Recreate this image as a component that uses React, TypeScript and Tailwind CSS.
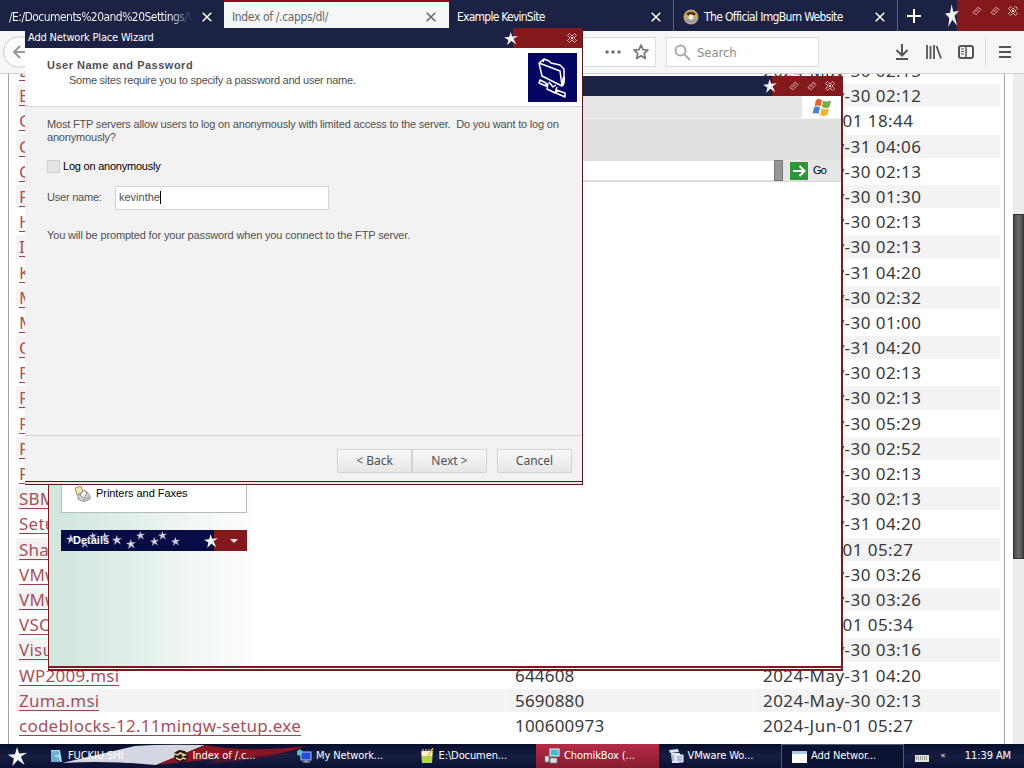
import React from 'react';
import { clsx } from 'clsx';

interface FileRow {
  name: string;
  size?: string;
  date: string;
}

const files: FileRow[] = [
  { name: 'D', date: '2024-May-30 02:13' },
  { name: 'E', date: '2024-May-30 02:12' },
  { name: 'G', date: '2024-Jun-01 18:44' },
  { name: 'G', date: '2024-May-31 04:06' },
  { name: 'G', date: '2024-May-30 02:13' },
  { name: 'F', date: '2024-May-30 01:30' },
  { name: 'H', date: '2024-May-30 02:13' },
  { name: 'I', date: '2024-May-30 02:13' },
  { name: 'K', date: '2024-May-31 04:20' },
  { name: 'M', date: '2024-May-30 02:32' },
  { name: 'M', date: '2024-May-30 01:00' },
  { name: 'O', date: '2024-May-31 04:20' },
  { name: 'P', date: '2024-May-30 02:13' },
  { name: 'P', date: '2024-May-30 02:13' },
  { name: 'P', date: '2024-May-30 05:29' },
  { name: 'P', date: '2024-May-30 02:52' },
  { name: 'P', date: '2024-May-30 02:13' },
  { name: 'SBM', date: '2024-May-30 02:13' },
  { name: 'Setu', date: '2024-May-31 04:20' },
  { name: 'Sha', date: '2024-Jun-01 05:27' },
  { name: 'VMw', date: '2024-May-30 03:26' },
  { name: 'VMw', date: '2024-May-30 03:26' },
  { name: 'VSC', date: '2024-Jun-01 05:34' },
  { name: 'Visu', date: '2024-May-30 03:16' },
  { name: 'WP2009.msi', size: '644608', date: '2024-May-31 04:20' },
  { name: 'Zuma.msi', size: '5690880', date: '2024-May-30 02:13' },
  { name: 'codeblocks-12.11mingw-setup.exe', size: '100600973', date: '2024-Jun-01 05:27' },
];

const Star = ({ className }: { className?: string }) => (
  <svg viewBox="0 0 20 20" preserveAspectRatio="none" className={className} fill="#f4f4fa">
    <path d="M9.500 0l2.200 6.800L20 6l-6.400 4.300L17.500 19l-7.100-5.200L4.500 20l1.700-7.800L0 8.200l7.300-.7z" />
  </svg>
);

const CloseX = ({ className }: { className?: string }) => (
  <svg viewBox="0 0 10 10" className={clsx('h-[10px] w-[10px] shrink-0', className)} fill="none" stroke="currentColor" strokeWidth="1.5">
    <path d="M.7.7l8.6 8.6M9.3.7L.7 9.3" />
  </svg>
);

// Themed caption buttons: dotted diamonds and a checkered cross
const CaptionDiamond = () => (
  <svg viewBox="0 0 10 10" className="h-[10px] w-[10px]" fill="none" stroke="#f3d5cf" strokeWidth="1" strokeDasharray="1.6 .5">
    <path d="M1 6.500L6 1.200l3 2.300L4 8.800zM3.500 6l3-2.700" />
  </svg>
);

const CaptionClose = () => (
  <svg viewBox="0 0 10 10" className="h-[10px] w-[10px]" fill="none" stroke="#f6e2de" strokeWidth="1">
    <path d="M.5 2.500l2-2L5 3 7.500.5l2 2L7 5l2.500 2.500-2 2L5 7 2.500 9.500l-2-2L3 5z" strokeDasharray="1.6 .5" />
    <path d="M3.500 3.500l3 3M6.500 3.500l-3 3" />
  </svg>
);

const Tabs = () => (
  <div className="flex h-[31px] bg-[#1b2243] text-[12px] text-white">
    <div className="flex w-[224px] items-center pl-[9px] pr-[12px] pt-[2px]">
      <span className="w-[184px] overflow-hidden whitespace-nowrap bg-gradient-to-r from-white from-88% to-[#1b2243] bg-clip-text tracking-[-0.550px] text-transparent">/E:/Documents%20and%20Settings/V</span>
      <CloseX className="ml-auto" />
    </div>
    <div className="flex h-[28px] w-[225px] items-center border-t-2 border-[#8c0b1c] bg-[#f5f6f6] pl-[8px] pr-[13px] pt-[3px] text-[#666]">
      <span className="tracking-[-0.350px]">Index of /.capps/dl/</span>
      <CloseX className="ml-auto" />
    </div>
    <div className="flex w-[224px] items-center pl-[8px] pr-[12px] pt-[2px]">
      <span className="tracking-[-0.750px]">Example KevinSite</span>
      <CloseX className="ml-auto" />
    </div>
    <div className="flex w-[225px] items-center border-x border-[#596080] pl-[9px] pr-[12px] pt-[2px]">
      <svg viewBox="0 0 16 16" className="mr-[5px] h-4 w-4">
        <circle cx="8" cy="8" r="7.500" fill="#b9a58c" />
        <path d="M2 8a6 6 0 0 1 12 0z" fill="#e8a61e" />
        <path d="M3 5a6 5 0 0 1 10 0l-5 3z" fill="#4c3a2a" />
        <path d="M2 9c3 4 9 4 12 0a6.400 6.400 0 0 1-12 0z" fill="#7f93bd" />
        <circle cx="8" cy="8" r="2.400" fill="#fff" />
      </svg>
      <span className="tracking-[-0.650px]">The Official ImgBurn Website</span>
      <CloseX className="ml-auto" />
    </div>
    <div className="flex w-[47px] items-center pl-[9px]">
      <svg viewBox="0 0 14 14" className="h-[14px] w-[14px]" stroke="#fff" strokeWidth="2">
        <path d="M7 0v14M0 7h14" />
      </svg>
    </div>
    <div className="flex flex-1 bg-gradient-to-r from-[#1b2243] from-15% to-[#84191d] to-15%">
      <Star className="mt-[4px] h-[23px] w-[14px]" />
      <div className="ml-auto flex gap-[8px] pr-[6px] pt-[6px]">
        <CaptionDiamond />
        <CaptionDiamond />
        <CaptionClose />
      </div>
    </div>
  </div>
);

const Toolbar = () => (
  <div className="flex h-[43px] items-center border-b border-[#d2d2d2] bg-[#f5f6f7]">
    <div className="ml-[3px] flex h-[32px] w-[32px] items-center rounded-full border border-[#ccc] bg-[#fbfbfb] pl-[8px]">
      <svg viewBox="0 0 16 14" className="h-[14px] w-4" fill="none" stroke="#999" strokeWidth="2">
        <path d="M16 7H2M8 1L2 7l6 6" />
      </svg>
    </div>
    <div className="ml-[20px] flex h-[30px] w-[601px] items-center justify-end gap-[12px] border border-[#ddd] bg-white pr-[6px]">
      <svg viewBox="0 0 16 4" className="h-1 w-4" fill="#777">
        <circle cx="2" cy="2" r="1.800" />
        <circle cx="8" cy="2" r="1.800" />
        <circle cx="14" cy="2" r="1.800" />
      </svg>
      <svg viewBox="0 0 16 16" className="h-4 w-4" fill="none" stroke="#777" strokeWidth="1.700" strokeLinejoin="round">
        <path d="M8 1l2 4.700 5 .4-3.800 3.300 1.200 5.100L8 11.800l-4.400 2.700 1.200-5.100L1 6.100l5-.4z" />
      </svg>
    </div>
    <div className="ml-[10px] flex h-[30px] w-[153px] items-center border border-[#ddd] bg-white pl-[7px]">
      <svg viewBox="0 0 17 17" className="h-[17px] w-[17px]" fill="none" stroke="#aaa" strokeWidth="2">
        <circle cx="6.500" cy="6.500" r="5" />
        <path d="M10 10l6 6" />
      </svg>
      <span className="ml-[6px] pt-[2px] text-[13px] tracking-[-0.100px] text-[#8c8c8c]">Search</span>
    </div>
    <div className="ml-auto flex items-center pr-[13px] text-[#555]">
      <svg viewBox="0 0 14 16" className="h-4 w-[14px]" fill="none" stroke="currentColor" strokeWidth="2">
        <path d="M7 0v11M1.500 6L7 11.500 12.500 6M1 15h12" />
      </svg>
      <svg viewBox="0 0 16 14" className="ml-[17px] h-[14px] w-4" fill="none" stroke="currentColor" strokeWidth="1.800">
        <path d="M1 0v14M4.500 1v13M8 0v14M10.500 1l4.500 12.500" />
      </svg>
      <svg viewBox="0 0 16 14" className="ml-[16px] h-[14px] w-4" fill="none" stroke="currentColor" strokeWidth="2">
        <rect x="1" y="1" width="14" height="12" rx="2" />
        <path d="M8 1v12" strokeWidth="1.500" />
        <path d="M3 4h3M3 6.500h3M3 9h3" strokeWidth="1" />
      </svg>
      <div className="ml-[11px] h-[28px] w-px bg-[#d8d8d8]" />
      <svg viewBox="0 0 12 12" className="ml-[13px] h-3 w-3" stroke="currentColor" strokeWidth="1.800">
        <path d="M0 1h12M0 6h12M0 11h12" />
      </svg>
    </div>
  </div>
);

const DirectoryListing = () => (
  <div className="flex h-[670px] overflow-hidden bg-white">
    <div className="ml-[8px] w-[997px] border-x border-[#a5a5a5] px-[2px]">
      <div className="-mt-[15px] pl-[5px] font-['Noto_Sans',sans-serif] text-[17px] text-[#3a3a3a]">
        {files.map((file, i) => (
          <div
            key={i}
            className={clsx('mb-[2px] grid h-[23.2px] grid-cols-[489px_247px_246px] gap-[1px] leading-[23.2px]', i % 2 === 1 && '[&>div]:bg-[#f3f3f3]')}
          >
            <div className="pl-[3px]">
              <span className="inline-block whitespace-nowrap border-b border-[#a1404c] leading-[18px] tracking-[0.230px] text-[#a8505a]">{file.name}</span>
            </div>
            <div className="pl-[9px] tracking-[0.200px]">{file.size}</div>
            <div className="pl-[9px] tracking-[0.450px]">{file.date}</div>
          </div>
        ))}
      </div>
    </div>
    <div className="ml-auto w-[11px] bg-[#ececec] pt-[140px]">
      <div className="h-[345px] border border-[#333] bg-gradient-to-r from-[#494949] via-[#6b6b6b] to-[#4b4b4b]" />
    </div>
  </div>
);

// [left, top, size]
const bannerStars = [
  [5, 4, 10], [19, 9, 9], [28, 2, 8], [39, 2, 10], [51, 5, 10], [65, 9, 10],
  [75, 1, 9], [89, 7, 9], [97, 1, 9], [110, 7, 9],
];

const ExplorerWindow = () => (
  <div className="absolute left-[48px] top-[76px] flex h-[595px] w-[795px] flex-col border-b-2 border-l border-r-2 border-[#781c20] bg-white pb-px font-['Liberation_Sans',sans-serif]">
    <div className="flex h-[20px] shrink-0 bg-[#1b2243]">
      <div className="ml-auto flex w-[78px] items-center bg-gradient-to-r from-[#1b2243] from-12% to-[#84191d] to-12% pr-[6px]">
        <Star className="h-[14px] w-[14px]" />
        <div className="ml-auto flex gap-[8px]">
          <CaptionDiamond />
          <CaptionDiamond />
          <CaptionClose />
        </div>
      </div>
    </div>
    <div className="flex h-[23px] shrink-0 border-b border-[#f4f4f4] bg-[#e5e5e5]">
      <div className="ml-auto flex w-[39px] items-center justify-center bg-white">
        <svg viewBox="0 0 20 18" className="h-[18px] w-5">
          <path d="M4 2q3-2 6 0L8.500 8.500q-3-2-6 0z" fill="#e3632d" />
          <path d="M11 2.500q3 2 8 0L17.500 9q-4 2-7.500 0z" fill="#72b043" />
          <path d="M2 9.500q3-2 6 0L6.500 16q-3-2-6 0z" fill="#4384cf" />
          <path d="M9.500 10.300q4 2 7.500 0L15.500 17q-4 2-7.500 0z" fill="#f1b62c" />
        </svg>
      </div>
    </div>
    <div className="h-[41px] shrink-0 bg-[#e0e0e0]" />
    <div className="flex h-[22px] shrink-0 items-stretch border-b border-[#d6d6d6] bg-[#e6e6e6] text-[11px] text-black">
      <div className="w-[725px] border-y border-[#ddd] bg-white" />
      <div className="w-[9px] border border-[#777] bg-[#969696]" />
      <div className="ml-[7px] flex items-center gap-[5px]">
        <svg viewBox="0 0 18 18" className="h-[18px] w-[18px]">
          <rect width="18" height="18" fill="#2f953b" />
          <path d="M3 9h11M9.500 4l5 5-5 5" fill="none" stroke="#fff" strokeWidth="2" />
        </svg>
        <span className="tracking-[-0.700px]">Go</span>
      </div>
    </div>
    <div className="flex min-h-0 flex-1 border-b-2 border-[#781c20]">
      <div className="w-[212px] bg-gradient-to-r from-[#d0e5dc] to-white pl-[12px] pt-[282px]">
        <div className="flex h-[49px] w-[186px] items-end border border-t-0 border-[#b4bcbc] bg-white pb-[10px] pl-[12px]">
          <svg viewBox="0 0 17 16" className="h-4 w-[17px]" stroke="#7a7a7a" strokeWidth=".800">
            <path d="M1 2l6-2 2 6-6 3z" fill="#f5e79d" />
            <path d="M4 9l8-4 4 5v3l-6 3-6-3z" fill="#d4d4d4" />
            <path d="M6 9l4-5 3 3-3 5z" fill="#fff" />
            <path d="M9 14l6-3" fill="none" />
          </svg>
          <span className="ml-[5px] text-[11px] leading-[17px] tracking-[-0.050px] text-black">Printers and Faxes</span>
        </div>
        <div className="relative mt-[17px] flex h-[21px] w-[186px] items-center bg-gradient-to-r from-[#080c45] from-82% to-[#84191d] to-82%">
          {bannerStars.map(([x, y, s], i) => (
            <div key={i} className="absolute opacity-85" style={{ left: x, top: y, width: s, height: s }}>
              <Star className="block h-full w-full" />
            </div>
          ))}
          <span className="relative ml-[12px] text-[11px] font-bold text-white [text-shadow:0_0_2px_#080c45,0_0_2px_#080c45]">Details</span>
          <Star className="ml-auto h-[14px] w-[14px]" />
          <svg viewBox="0 0 8 4" className="ml-[12px] mr-[9px] h-1 w-2" fill="#f1ded6"><path d="M0 0h8L4 4z" /></svg>
        </div>
      </div>
    </div>
  </div>
);

const WizardButton = ({ label, className }: { label: string; className?: string }) => (
  <button className={clsx('h-[24px] w-[75px] border border-[#d3d3d3] bg-gradient-to-b from-[#f9f9f9] to-[#e6e6e6] pb-px font-[\'Noto_Sans\',sans-serif] text-[12px] text-[#505050]', className)}>
    {label}
  </button>
);

const NetworkWizard = () => (
  <div className="absolute left-[25px] top-[28px] flex h-[457px] w-[558px] flex-col border-b border-r border-[#591820] bg-[#f2f2f2] font-['Liberation_Sans',sans-serif] text-[11px] text-[#505050]">
    <div className="flex h-[20px] shrink-0 items-center bg-[#1b2243] pl-[3px] text-white">
      <span className="font-['DejaVu_Sans_Condensed','DejaVu_Sans',sans-serif] text-[11px] tracking-[-0.180px]">Add Network Place Wizard</span>
      <div className="ml-auto flex h-full w-[78px] items-center bg-gradient-to-r from-[#1b2243] from-12% to-[#84191d] to-12% pr-[5px]">
        <Star className="h-[13px] w-[14px]" />
        <div className="ml-auto"><CaptionClose /></div>
      </div>
    </div>
    <div className="flex h-[59px] shrink-0 border-b border-[#d5d5d5] bg-white">
      <div className="pl-[22px] pt-[10px] leading-[15px]">
        <p className="font-bold tracking-[0.500px]">User Name and Password</p>
        <p className="pl-[22px] tracking-[-0.240px]">Some sites require you to specify a password and user name.</p>
      </div>
      <svg viewBox="0 0 49 49" className="ml-auto mr-[5px] mt-[5px] h-[49px] w-[49px] bg-[#050562]" fill="none" stroke="#fff" strokeWidth="1.500" strokeLinejoin="round">
        <path d="M11 10l3 13 20 10-2-15zM11 10l5-4 5 2 2 2 9 2 4 4v14l-2 3M16 6l-1 3" />
        <path d="M34 33l2-9" strokeWidth="2.500" />
        <path d="M12 27l6 3v3l-7-3zM20 30l-1 6 8 4 2-6M21 29l4 5 3-2M18 32l2 1M28 37l9 3v4l-9-4z" />
      </svg>
    </div>
    <div className="flex flex-1 flex-col items-start pl-[22px]">
      <p className="mt-[11px] w-[532px] leading-[13px] tracking-[-0.185px]">Most FTP servers allow users to log on anonymously with limited access to the server.&nbsp; Do you want to log on<br />anonymously?</p>
      <div className="mt-[15px] flex h-[14px] items-center text-black">
        <span className="h-[13px] w-[13px] border border-[#cecece] bg-[#e5e5e5]" />
        <span className="ml-[3px] tracking-[-0.220px]">Log on anonymously</span>
      </div>
      <div className="mt-[13px] flex h-[24px] items-center">
        <span className="w-[68px] pb-[2px] tracking-[-0.220px]">User name:</span>
        <div className="flex h-[24px] w-[214px] items-center border border-[#d2d2d2] bg-white pb-[2px] pl-[3px]">
          <span>kevinthe</span>
          <span className="h-[13px] w-px bg-black" />
        </div>
      </div>
      <p className="mt-[17px] leading-[16px] tracking-[-0.150px]">You will be prompted for your password when you connect to the FTP server.</p>
    </div>
    <div className="flex h-[46px] shrink-0 items-start border-t border-[#d2d2d2] pl-[312px] pt-[13px]">
      <WizardButton label="< Back" />
      <WizardButton label="Next >" />
      <WizardButton label="Cancel" className="ml-[10px]" />
    </div>
    <div className="h-[3px] shrink-0 border-t border-[#591820] bg-[#f9e6e2]" />
  </div>
);

const tasks = [
  { label: 'FUCKIU SHI', icon: 'page', pad: 'pl-[2px]' },
  { label: 'Index of /.c...', icon: 'fox', pad: 'pl-[4px]' },
  { label: 'My Network...', icon: 'network', pad: 'pl-[5px]' },
  { label: 'E:\\Documen...', icon: 'notepad', pad: 'pl-[5px]' },
  { label: 'ChomikBox (...', icon: 'installer', pad: 'pl-[8px]' },
  { label: 'VMware Wo...', icon: 'trash', pad: 'pl-[9px]' },
  { label: 'Add Networ...', icon: 'window', pad: 'pl-[9px]' },
];

const TaskIcon = ({ icon }: { icon: string }) => (
  <svg viewBox="0 0 16 16" className="h-4 w-4 shrink-0">
    {icon === 'page' && (
      <>
        <path d="M3 2h9l2 12H3z" fill="#a9ddf2" />
        <path d="M5 4h6M5 6h6M9 9l3 5" stroke="#347eaa" />
        <path d="M3 2l8 12H3z" fill="#68aed0" />
      </>
    )}
    {icon === 'fox' && (
      <>
        <path d="M1 5l5-3 6 1 3 5-2 5-7 2-4-4z" fill="#26170d" />
        <path d="M1 6l4 1 2-2 5 2-3 1M3 10l4 2 3-2 3 1" stroke="#e8d5a4" fill="none" strokeWidth="1.500" />
      </>
    )}
    {icon === 'network' && (
      <>
        <path d="M1 3l3-2 3 3-2 4-4-1z" fill="#49bcbf" />
        <rect x="5" y="4" width="10" height="8" fill="#274cda" stroke="#a7c5f0" />
        <path d="M7 14h7M10 12v2" stroke="#c4d0e0" />
      </>
    )}
    {icon === 'notepad' && (
      <>
        <path d="M2 3h12l-1 12H3z" fill="#b3d44a" />
        <path d="M3 3h10v5H3z" fill="#fff5ce" />
        <path d="M4 1v3M7 1v3M10 1v3" stroke="#ddd" />
        <path d="M14 0L9 8" stroke="#e9b949" strokeWidth="1.500" />
      </>
    )}
    {icon === 'installer' && (
      <>
        <rect x="6" y="1" width="9" height="7" fill="#41bbcf" stroke="#e5f5f5" />
        <path d="M1 8h4v6H1zM6 10h7v5H6z" fill="#dce1e8" stroke="#687c86" strokeWidth=".700" />
      </>
    )}
    {icon === 'trash' && (
      <>
        <path d="M1 2l9-1 1 3-9 1zM3 5h9l-1 10H4z" fill="#d9e2ef" />
        <path d="M8 7h7v7H8z" fill="#a9c2e1" stroke="#fff" />
        <path d="M5 7v6" stroke="#8098b4" />
      </>
    )}
    {icon === 'window' && (
      <>
        <rect x="1" y="2" width="15" height="12" fill="#fff" />
        <rect x="1" y="2" width="15" height="3" fill="#a9c9ec" />
      </>
    )}
  </svg>
);

const Taskbar = () => (
  <div className="relative flex h-[24px] bg-gradient-to-b from-[#080e2b] via-[#161e42] to-[#0b1034] text-[11px] text-white">
    {/* Waving flag stripes behind the first tasks */}
    <svg viewBox="0 0 310 24" className="absolute left-0 top-0 h-6 w-[310px]">
      <path d="M62 19Q105 9 135 2 160 0 205 1L156 21Q105 16 62 19z" fill="#d5d8e3" />
      <path d="M205 1Q245 9 306 2 275 14 225 14 185 18 156 21z" fill="#8a1522" />
      <path d="M220 14Q260 13 295 9 250 17 205 20z" fill="#4b1730" />
    </svg>
    <div className="relative flex w-[46px] items-center pl-[8px]">
      <Star className="h-[19px] w-[19px]" />
    </div>
    {tasks.map((task, i) => (
      <div
        key={task.label}
        className={clsx(
          'relative flex w-[122.5px] items-center whitespace-nowrap',
          task.pad,
          i === 4 && 'bg-gradient-to-b from-[#b52c46] to-[#871c30]',
          i === 6 && 'border-x border-t border-[#505770] bg-[#0b1232]',
        )}
      >
        <TaskIcon icon={task.icon} />
        <span className="ml-[4px] tracking-[-0.100px]">{task.label}</span>
      </div>
    ))}
    <div className="flex flex-1 items-center pl-[11px]">
      <svg viewBox="0 0 14 7" className="mt-[4px] h-[7px] w-[14px]">
        <rect width="14" height="7" fill="#e5e5df" />
        <path d="M1 2h12M1 4h12" stroke="#333" strokeWidth=".800" strokeDasharray="1 1" />
      </svg>
      <span className="ml-[12px] text-[9px]">«</span>
      <span className="ml-auto mr-[13px] whitespace-nowrap pt-px tracking-[-0.100px]">11:39 AM</span>
    </div>
  </div>
);

export default function App() {
  return (
    <div className="relative h-[768px] w-[1024px] overflow-hidden bg-white font-['DejaVu_Sans_Condensed','DejaVu_Sans',sans-serif]">
      <Tabs />
      <Toolbar />
      <DirectoryListing />
      <ExplorerWindow />
      <NetworkWizard />
      <Taskbar />
    </div>
  );
}
